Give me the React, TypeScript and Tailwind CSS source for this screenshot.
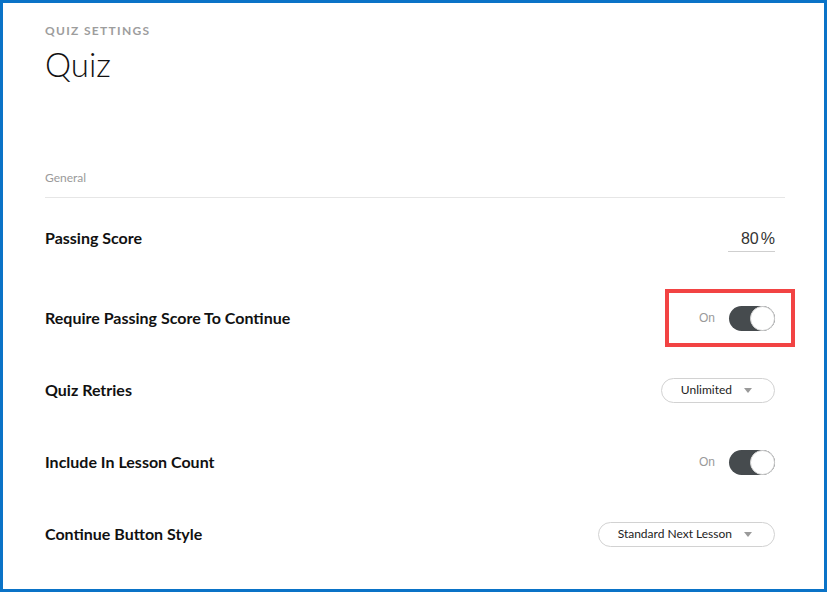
const lato = { fontFamily: '"Lato", "Noto Sans", "Liberation Sans", sans-serif' };

function Caret() {
  return (
    <svg width="8" height="5" viewBox="0 0 8 5" className="ml-[12px] shrink-0">
      <path d="M0 0h8L4 5z" fill="#9a9a9a" />
    </svg>
  );
}

function Toggle() {
  return (
    <div className="flex items-center">
      <span className="mr-[14px] text-[12px] text-[#9a9a9a] font-['Liberation_Sans',Arial,sans-serif]">On</span>
      <div className="relative h-[25px] w-[46px] rounded-full bg-[#464b4e]">
        <div className="absolute right-0 top-0 h-[25px] w-[25px] rounded-full border border-[#d4d4d4] bg-white" />
      </div>
    </div>
  );
}

function Select({ label }: { label: string }) {
  return (
    <div className="flex h-[25px] items-center rounded-full border border-[#d2d2d2] bg-white pl-[19px] pr-[22px] text-[12px] text-[#222]">
      <span>{label}</span>
      <Caret />
    </div>
  );
}

function Row({ label, children, className = '' }: { label: string; children: React.ReactNode; className?: string }) {
  return (
    <div className={`flex h-[72px] items-center justify-between pr-[10px] ${className}`}>
      <span className="text-[16px] font-bold text-[#111]">{label}</span>
      {children}
    </div>
  );
}

export default function App() {
  return (
    <div className="relative h-[592px] w-[827px] overflow-hidden border-[3px] border-[#0a73c7] bg-white" style={lato}>
      <div className="pl-[42px] pr-[39px] pt-[21px]">
        <div className="text-[12px] font-bold leading-[14px] tracking-[0.11em] text-[#9d9d9d]">QUIZ SETTINGS</div>
        <h1 className="mt-[6px] text-[33px] font-light leading-[40px] text-[#111]">Quiz</h1>
        <div className="mt-[87px] text-[12px] leading-[14px] text-[#9a9a9a]">General</div>
        <div className="mt-[12px] h-px bg-[#e6e6e6]" />
        <Row label="Passing Score" className="mt-[4px]">
          <div className="mt-[4px] w-[47px] border-b border-[#cfcfcf] pb-[2px] text-right text-[16px] leading-[20px] text-[#333] font-['Liberation_Sans',Arial,sans-serif]">
            80<span className="ml-[2px]">%</span>
          </div>
        </Row>
        <Row label="Require Passing Score To Continue" className="mt-[8px]">
          <Toggle />
        </Row>
        <Row label="Quiz Retries">
          <Select label="Unlimited" />
        </Row>
        <Row label="Include In Lesson Count">
          <Toggle />
        </Row>
        <Row label="Continue Button Style">
          <Select label="Standard Next Lesson" />
        </Row>
      </div>
      <div className="pointer-events-none absolute left-[662px] top-[286px] h-[58px] w-[130px] border-[4px] border-[#f24343]" />
    </div>
  );
}
